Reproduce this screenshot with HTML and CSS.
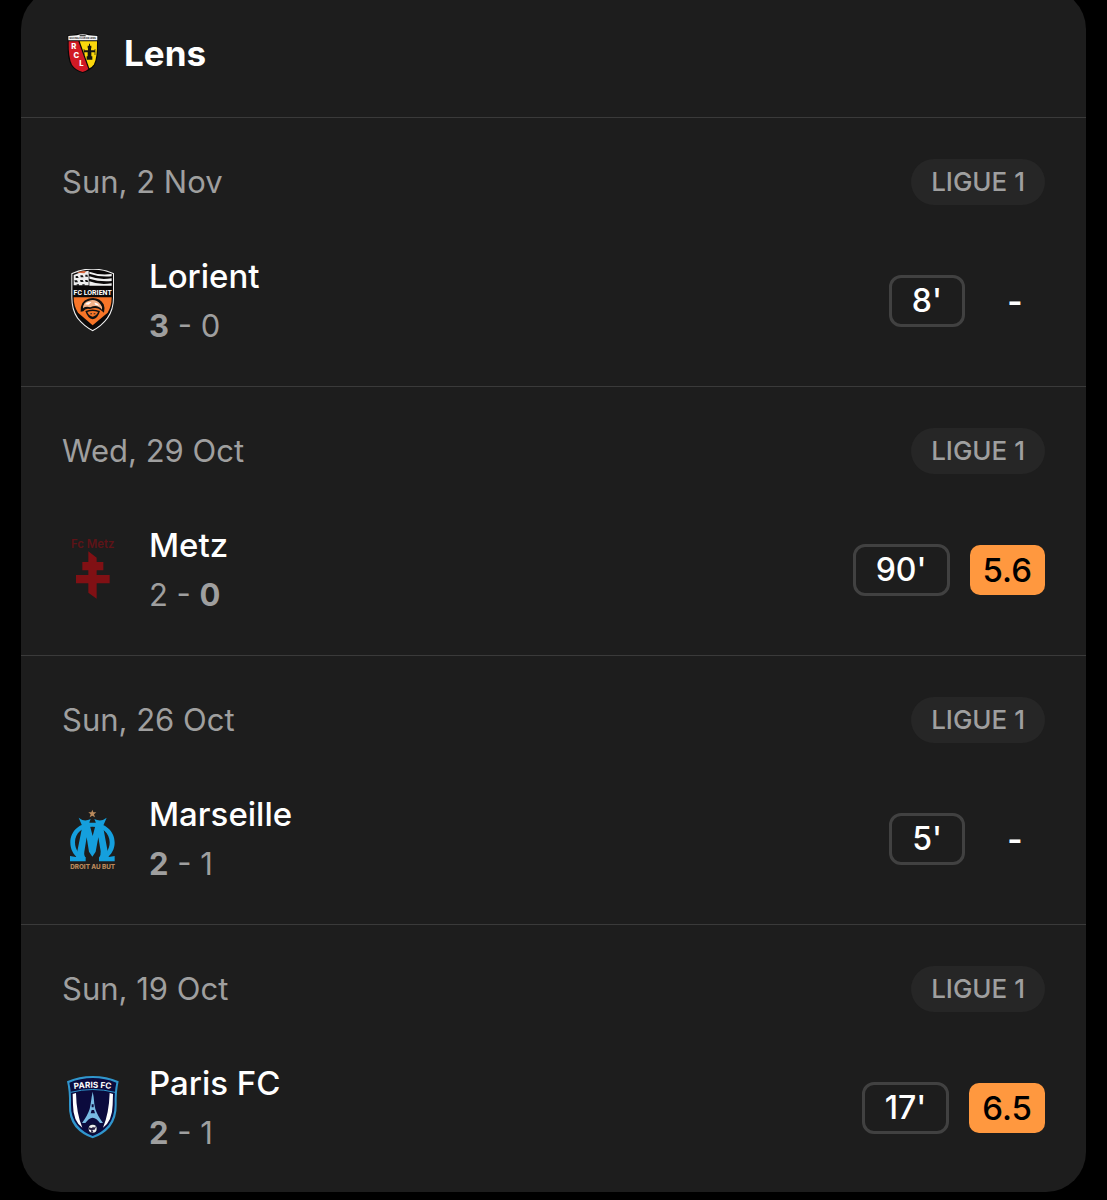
FILE: index.html
```html
<!DOCTYPE html>
<html lang="en">
<head>
    <meta charset="UTF-8">
    <meta name="viewport" content="width=device-width, initial-scale=1.0">
    <title>Lens - Matches</title>
    <link rel="stylesheet" href="styles.css">
</head>
<body>

    <main class="match-card">
        <header class="team-header">
            <svg class="team-logo" viewBox="3 12 120 120" aria-hidden="true">
                <path d="M17 19 Q38 18 45 14 H80 Q87 18 108 19 V50 Q109 88 98 109 Q87 125 62 132 Q37 125 27 109 Q16 88 17 50Z" fill="#080808"/>
                <path d="M20 37 H49 L79 120 Q73 126 62 129 Q39 122 30 107 Q19 87 20 37Z" fill="#d11a25"/>
                <path d="M53 37 H105 Q106 87 96 106 Q91 114 82 118Z" fill="#fbd70c"/>
                <path d="M19 21 L45 19 Q62 13 80 19 L106 21 V34 H19Z" fill="#f4f4f4"/>
                <path d="M53 18h18v4h-18z" fill="#444"/>
                <text x="62" y="31" class="crest-text lens-name">RACING CLUB DE LENS</text>
                <path d="M81 44 H84 V50 H88 V58 H87 V64 H98 V60 H100 V78 H98 V70 H88 V82 H91 V92 H74 V82 H77 V70 H67 V78 H65 V60 H67 V64 H78 V58 H77 V50 H81Z" fill="#151510"/>
                <text x="35" y="60" class="crest-text lens-letter">R</text>
                <text x="43" y="86" class="crest-text lens-letter">C</text>
                <text x="58" y="112" class="crest-text lens-letter">L</text>
            </svg>
            <h1 class="team-title">Lens</h1>
        </header>

        <!-- Lorient -->
        <section class="match">
            <div class="match-top">
                <time class="match-date" datetime="2025-11-02">Sun, 2 Nov</time>
                <span class="league">LIGUE 1</span>
            </div>
            <div class="match-body">
                <svg class="club-logo" viewBox="9 27 180 192" aria-hidden="true">
                    <path d="M34 40 Q68 24 97 26 Q130 25 162 40 V112 Q162 150 144 175 Q126 199 98 214 Q70 199 51 175 Q34 150 34 112Z" fill="#f1f1f1"/>
                    <path d="M37 42 Q68 28 97 29 Q130 28 159 42 V112 Q159 149 141 173 Q124 196 98 210 Q72 196 54 173 Q37 149 37 112Z" fill="#0b0909"/>
                    <path d="M41 45 Q62 35 86 32 V76 H41Z" fill="#eee"/>
                    <path d="M51 38 Q66 31 79 34 L73 40Z" fill="#d8653a"/>
                    <path d="M47 48h6l3 6h-9zM61 46h7l3 6h-9zM76 44h6l2 6h-8zM43 61h8l3 6h-9zM60 60h8l3 6h-9zM75 60h7l3 6h-8zM50 73h7v4h-7zM67 73h7v4h-7z" fill="#151515"/>
                    <path d="M88 35 Q119 47 155 42 V49 Q119 52 88 41Z M88 49 Q119 61 155 55 V63 Q119 66 88 56Z M88 64 Q119 76 155 70 V77 H88Z" fill="#f1f1f1"/>
                    <text x="98" y="104" class="crest-text lorient-name">FC LORIENT</text>
                    <path d="M41 112 H155 Q155 139 143 158 L98 196 L54 158 Q41 139 41 112Z" fill="#f77528"/>
                    <path d="M62 155 Q60 123 85 116 Q116 108 131 133 Q136 145 132 158 L122 150 Q110 139 90 147 Q75 144 70 154Z" fill="#101010"/>
                    <path d="M69 145 Q69 126 87 122 Q108 116 121 132 Q128 140 126 149 Q112 132 91 142 Q77 138 69 145Z" fill="#f4b38a"/>
                    <path d="M75 133 Q83 124 94 126 L86 134Z M103 128 Q113 127 118 137 L106 134Z" fill="#fff"/>
                    <path d="M76 153 Q98 144 120 153 Q114 175 98 178 Q83 175 76 153Z" fill="#111"/>
                    <path d="M82 156 Q98 150 114 156 Q110 167 98 170 Q86 167 82 156Z" fill="#f77528"/>
                    <path d="M91 160h5v3h-5zM101 160h5v3h-5z" fill="#222"/>
                </svg>
                <div class="match-info">
                    <h2 class="opponent">Lorient</h2>
                    <div class="score"><b>3</b> - 0</div>
                </div>
                <div class="match-stats">
                    <span class="minutes">8'</span>
                    <span class="rating rating-none">-</span>
                </div>
            </div>
        </section>

        <!-- Metz -->
        <section class="match">
            <div class="match-top">
                <time class="match-date" datetime="2025-10-29">Wed, 29 Oct</time>
                <span class="league">LIGUE 1</span>
            </div>
            <div class="match-body">
                <svg class="club-logo" viewBox="9 24 180 192" aria-hidden="true">
                    <text x="98" y="53" class="crest-text metz-name">Fc Metz</text>
                    <path d="M85 64 L110 83 V96 H130 V121 H110 V135 H149 V160 H110 V206 L85 188 V160 H48 V135 H85 V121 H67 V96 H85Z" fill="#801014"/>
                </svg>
                <div class="match-info">
                    <h2 class="opponent">Metz</h2>
                    <div class="score">2 - <b>0</b></div>
                </div>
                <div class="match-stats">
                    <span class="minutes">90'</span>
                    <span class="rating">5.6</span>
                </div>
            </div>
        </section>

        <!-- Marseille -->
        <section class="match">
            <div class="match-top">
                <time class="match-date" datetime="2025-10-26">Sun, 26 Oct</time>
                <span class="league">LIGUE 1</span>
            </div>
            <div class="match-body">
                <svg class="club-logo" viewBox="9 21 180 192" aria-hidden="true">
                    <path d="M97 29 L100 37 109 37 102 43 105 52 97 47 89 52 92 43 85 37 94 37Z" fill="#ba8a5c"/>
                    <g fill="#159fdd">
                        <path fill-rule="evenodd" d="M97 68 C134 68 164 91 164 128 C164 147 154 163 142 172 L164 168 V184 H117 V173 C137 165 149 149 149 127 C149 99 126 80 97 80 C68 80 45 99 45 127 C45 149 57 165 77 173 V184 H30 V168 L52 172 C40 163 31 147 31 128 C31 91 60 68 97 68Z"/>
                        <path d="M56 53 Q72 67 92 57 Q87 65 89 74 L98 108 L107 74 Q108 65 103 57 Q123 67 140 53 L129 79 L144 160 Q145 171 150 180 L117 174 Q123 166 122 154 L115 112 L107 155 L97 170 L87 155 L80 112 L73 155 Q71 167 78 174 L44 180 Q50 169 51 158 L67 79Z"/>
                    </g>
                    <text x="98" y="206" class="crest-text marseille-motto">DROIT AU BUT</text>
                </svg>
                <div class="match-info">
                    <h2 class="opponent">Marseille</h2>
                    <div class="score"><b>2</b> - 1</div>
                </div>
                <div class="match-stats">
                    <span class="minutes">5'</span>
                    <span class="rating rating-none">-</span>
                </div>
            </div>
        </section>

        <!-- Paris FC -->
        <section class="match">
            <div class="match-top">
                <time class="match-date" datetime="2025-10-19">Sun, 19 Oct</time>
                <span class="league">LIGUE 1</span>
            </div>
            <div class="match-body">
                <svg class="club-logo" viewBox="9 33 180 192" aria-hidden="true">
                    <path d="M21 49 Q57 33 98 33 Q140 33 176 49 Q169 78 170 119 Q171 158 150 186 Q130 209 98 220 Q66 209 46 186 Q25 158 27 119 Q28 78 21 49Z" fill="#3096cd"/>
                    <path d="M28 53 Q62 39 98 39 Q135 39 169 53 Q163 80 164 119 Q164 155 145 181 Q126 203 98 213 Q70 203 52 181 Q32 155 33 119 Q34 80 28 53Z" fill="#0b0b3d"/>
                    <path d="M32 82 Q98 65 165 82" fill="none" stroke="#3096cd" stroke-width="3"/>
                    <path d="M38 87 L48 84 Q49 145 67 188 Q39 168 39 119Z M159 87 L149 84 Q147 145 129 188 Q157 168 158 119Z" fill="#fff"/>
                    <path id="paris-arc" d="M22 75 Q98 62 174 75" fill="none"/>
                    <text class="crest-text paris-name"><textPath href="#paris-arc" startOffset="50%">PARIS FC</textPath></text>
                    <path fill-rule="evenodd" d="M98 80 L101 96 103 117 106 132 Q112 151 129 174 H120 Q110 159 98 158 Q86 159 76 174 H66 Q83 151 89 132 L92 117 95 96Z M95 127 H101 V118 H95Z M92 145 H105 L102 135 H95Z" fill="#78bbe3"/>
                    <circle cx="98" cy="191" r="15" fill="#0a1230"/>
                    <circle cx="98" cy="191" r="12" fill="#eee"/>
                    <path d="M88 187 Q96 192 99 185 L102 188 109 183 104 194 97 195 100 202 93 203 94 196 86 193Z" fill="#251f42"/>
                </svg>
                <div class="match-info">
                    <h2 class="opponent">Paris FC</h2>
                    <div class="score"><b>2</b> - 1</div>
                </div>
                <div class="match-stats">
                    <span class="minutes">17'</span>
                    <span class="rating">6.5</span>
                </div>
            </div>
        </section>
    </main>

</body>
</html>
```
FILE: styles.css
```css
* {
    box-sizing: border-box;
}
body {
    margin: 0;
    padding: 0 21px 8px;
    background-color: #000;
    color: #fff;
    font-family: Inter, "Liberation Sans", sans-serif;
    display: flow-root;
}
/* the list is scrolled a little, so the top edge is cut off */
.match-card {
    margin-top: -11px;
    background-color: #1d1d1d;
    border-radius: 40px;
}
.team-header {
    display: flex;
    align-items: center;
    gap: 21px;
    padding: 40px 42px;
}
.team-logo {
    width: 40px;
    height: 40px;
}
.team-title {
    margin: 0;
    font-size: 35px;
    line-height: 48px;
    font-weight: 700;
}
.match {
    padding: 41px 41px 36px;
    border-top: 1px solid #3a3a3a;
}
.match:last-child {
    padding-bottom: 35px;
}
.match-top {
    display: flex;
    align-items: center;
    justify-content: space-between;
    margin-bottom: 47px;
}
.match-date {
    font-size: 31px;
    line-height: 46px;
    color: #9f9f9f;
}
.league {
    padding: 0 20px;
    border-radius: 23px;
    background-color: #262626;
    color: #9f9f9f;
    font-size: 26px;
    line-height: 46px;
    font-weight: 500;
}
.match-body {
    display: flex;
    align-items: center;
}
.club-logo {
    width: 60px;
    height: 64px;
    margin: 0 26px 0 1px;
}
.match-info {
    flex: 1;
}
.opponent {
    margin: 0;
    font-size: 33px;
    line-height: 49px;
    font-weight: 500;
}
.score {
    font-size: 31px;
    line-height: 49px;
    color: #9f9f9f;
}
.score b {
    font-weight: 700;
}
.match-stats {
    display: flex;
    align-items: center;
    gap: 20px;
}
.minutes {
    padding: 0 20px;
    border: 3px solid #414141;
    border-radius: 12px;
    font-size: 32px;
    line-height: 46px;
    font-weight: 500;
}
.rating {
    padding: 0 13px;
    border-radius: 10px;
    background-color: #ff983f;
    color: #000;
    font-size: 33px;
    line-height: 50px;
    font-weight: 500;
}
.rating-none {
    min-width: 60px;
    background: none;
    color: #fff;
    font-weight: 600;
    text-align: center;
}

/* lettering on the crests */
.crest-text {
    text-anchor: middle;
    font-weight: 700;
    fill: #fff;
}
.lens-name {
    font-size: 7px;
    fill: #111;
}
.lens-letter {
    font-size: 23px;
    font-weight: 800;
}
.lorient-name {
    font-family: Roboto, sans-serif;
    font-size: 21px;
}
.metz-name {
    font-size: 34px;
    font-weight: 600;
    fill: #5e1317;
}
.marseille-motto {
    font-size: 19px;
    font-weight: 800;
    fill: #ba8a5c;
}
.paris-name {
    font-size: 25px;
}
```
